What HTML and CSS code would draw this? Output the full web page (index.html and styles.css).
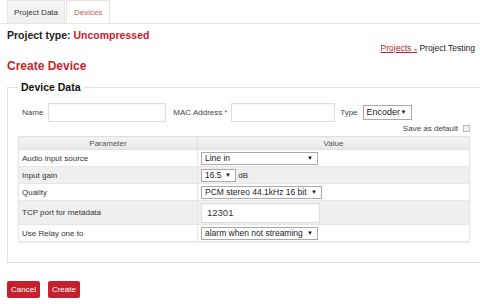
FILE: index.html
```html
<!DOCTYPE html>
<html lang="en">

<head>
    <meta charset="UTF-8">
    <meta name="viewport" content="width=device-width, initial-scale=1.0">
    <title>Create Device</title>
    <link rel="stylesheet" href="styles.css">
</head>

<body>
    <div class="tabs">
        <a class="tab" href="#">Project Data</a>
        <a class="tab active" href="#">Devices</a>
    </div>

    <div class="page">
        <h2 class="project-type">Project type: <span class="red">Uncompressed</span></h2>
        <div class="crumbs"><a href="#">Projects <small>&raquo;</small></a> Project Testing</div>
        <h1 class="title">Create Device</h1>

        <form action="">
            <fieldset class="device">
                <legend>Device Data</legend>
                <div class="body">
                    <div class="row">
                        <label for="name" class="lbl-name">Name</label>
                        <input type="text" id="name" class="txt name-input">
                        <label for="mac" class="lbl-mac">MAC Address <span class="req">*</span></label>
                        <input type="text" id="mac" class="txt mac-input">
                        <label for="type" class="lbl-type">Type</label>
                        <span class="select sel-type"><select id="type">
                                <option>Encoder</option>
                            </select></span>
                    </div>
                    <div class="save">
                        <label for="save">Save as default</label>
                        <input type="checkbox" id="save" class="check">
                    </div>

                    <table class="params">
                        <thead>
                            <tr>
                                <th class="col-param">Parameter</th>
                                <th>Value</th>
                            </tr>
                        </thead>
                        <tbody>
                            <tr>
                                <td>Audio input source</td>
                                <td><span class="select sel-wide"><select>
                                            <option>Line in</option>
                                        </select></span></td>
                            </tr>
                            <tr>
                                <td>Input gain</td>
                                <td><span class="select sel-gain"><select>
                                            <option>16.5</option>
                                        </select></span> dB</td>
                            </tr>
                            <tr>
                                <td>Quality</td>
                                <td><span class="select sel-quality"><select>
                                            <option>PCM stereo 44.1kHz 16 bit</option>
                                        </select></span></td>
                            </tr>
                            <tr class="tall">
                                <td>TCP port for metadata</td>
                                <td><input type="text" class="txt port-input" value="12301"></td>
                            </tr>
                            <tr>
                                <td>Use Relay one to</td>
                                <td><span class="select sel-wide"><select>
                                            <option>alarm when not streaming</option>
                                        </select></span></td>
                            </tr>
                        </tbody>
                    </table>
                </div>
            </fieldset>

            <div class="buttons">
                <button type="button" class="btn">Cancel</button>
                <button type="submit" class="btn">Create</button>
            </div>
        </form>
    </div>
</body>

</html>
```

FILE: styles.css
```css
body {
    margin: 0;
    font-family: "Liberation Sans", Arial, sans-serif;
    color: #222;
    background: #fff;
    overflow: hidden;
}

.tabs {
    display: flex;
    height: 23px;
    padding-left: 7px;
    border-bottom: 1px solid #e6e6e6;
}

.tab {
    display: block;
    padding: 0 6px;
    line-height: 23px;
    font-size: 8px;
    color: #333;
    text-decoration: none;
    border: 1px solid #e6e6e6;
    border-bottom: none;
    background: linear-gradient(#f7f7f7, #efefef);
}

.tab.active {
    margin-left: 1px;
    padding: 0 7px;
    color: #c45a5a;
    background: #fff;
    border-color: #f2dcdc;
}

.page {
    padding-left: 7px;
}

.project-type {
    margin: 4px 0 0;
    font-size: 10.5px;
    line-height: 14px;
}

.red {
    color: #c8202c;
}

.crumbs {
    text-align: right;
    padding-right: 5px;
    font-size: 8.5px;
    line-height: 12px;
    color: #222;
}

.crumbs a {
    color: #b3262e;
    text-decoration: underline;
}

.crumbs small {
    font-size: 6px;
}

.title {
    margin: 3px 0 0;
    font-size: 12px;
    line-height: 16px;
    color: #c0272f;
}

.device {
    margin: 6px -30px 0 0;
    padding: 0 10px 20px;
    border: 1px solid #e2e2e2;
}

.device legend {
    padding: 0 3px;
    font-size: 10.5px;
    font-weight: bold;
    line-height: 14px;
    color: #111;
}

.body {
    width: 452px;
    padding-top: 9px;
}

.row {
    display: flex;
    align-items: center;
    height: 19px;
    font-size: 8px;
    color: #444;
}

.lbl-name {
    margin-left: 4px;
}

.txt {
    box-sizing: border-box;
    height: 19px;
    border: 1px solid #ddd;
    background: #fff;
    box-shadow: inset 0 1px 1px rgba(0, 0, 0, 0.04);
    font-family: inherit;
    font-size: 9px;
    color: #333;
    padding: 0 4px;
}

.name-input {
    width: 118px;
    margin-left: 5px;
}

.lbl-mac {
    margin-left: 7px;
}

.req {
    color: #c8202c;
    font-size: 7px;
}

.mac-input {
    width: 104px;
    margin-left: 4px;
}

.lbl-type {
    margin-left: 5px;
}

.select {
    position: relative;
    display: inline-block;
    box-sizing: border-box;
    height: 13px;
    border: 1px solid #aaa;
    background: #fff;
    vertical-align: middle;
}

.select select {
    appearance: none;
    -webkit-appearance: none;
    border: none;
    background: transparent;
    margin: 0;
    padding: 0 0 0 3px;
    width: 100%;
    height: 11px;
    line-height: 11px;
    font-family: inherit;
    font-size: 8.5px;
    color: #222;
    outline: none;
}

.select::after {
    content: "\25BC";
    position: absolute;
    right: 4px;
    top: 2px;
    font-size: 6px;
    line-height: 7px;
    color: #111;
    pointer-events: none;
}

.sel-type {
    width: 49px;
    height: 15px;
    margin-left: 5px;
}

.sel-type select {
    height: 13px;
    font-size: 9px;
}

.sel-type::after {
    top: 3px;
}

.save {
    display: flex;
    justify-content: flex-end;
    align-items: center;
    height: 11px;
    margin-top: 1px;
    font-size: 8px;
    color: #444;
}

.check {
    appearance: none;
    -webkit-appearance: none;
    width: 7px;
    height: 7px;
    margin: 0 0 0 5px;
    border: 1px solid #bbb;
    background: #eee;
}

.params {
    width: 452px;
    margin-top: 2px;
    border-collapse: collapse;
    border: 1px solid #e2e2e2;
    box-shadow: 0 1px 2px rgba(0, 0, 0, 0.08);
    font-size: 8px;
    color: #333;
}

.params th {
    height: 12px;
    padding: 0;
    font-weight: normal;
    color: #555;
    background: linear-gradient(#f4f4f4, #e8e8e8);
    border: 1px solid #e0e0e0;
}

.col-param {
    width: 178px;
}

.params td {
    height: 16px;
    padding: 0 3px;
    border: 1px solid #e6e6e6;
    border-width: 1px 1px 0 1px;
}

.params tbody tr:nth-child(even) td {
    background: #efefef;
}

.params tr.tall td {
    height: 23px;
}

.sel-wide {
    width: 117px;
}

.sel-gain {
    width: 35px;
}

.sel-quality {
    width: 121px;
}

.port-input {
    width: 119px;
    height: 20px;
    padding-left: 5px;
    font-size: 9.5px;
}

.buttons {
    display: flex;
    gap: 8px;
    margin-top: 18px;
}

.btn {
    height: 17px;
    padding: 0 4px;
    border: none;
    border-radius: 2px;
    background: #c5202e;
    color: #fff;
    font-family: inherit;
    font-size: 8px;
    cursor: pointer;
}
```
